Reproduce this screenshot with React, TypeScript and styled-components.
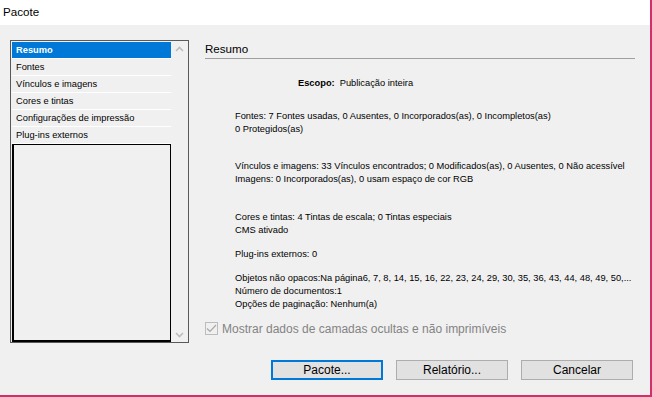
import styled, { createGlobalStyle } from 'styled-components'

const GlobalStyle = createGlobalStyle`
  html, body {
    margin: 0;
    padding: 0;
    background: #f0f0f0;
    overflow: hidden;
  }
  * { box-sizing: border-box; }
`

const Window = styled.div`
  width: 652px;
  height: 397px;
  display: flex;
  flex-direction: column;
  background: #f0f0f0;
  border-right: 2px solid #d2306c;
  border-bottom: 2px solid #d2306c;
  font-family: 'Liberation Sans', Arial, sans-serif;
  color: #000;
`

const TitleBar = styled.div`
  height: 25px;
  line-height: 24px;
  padding-left: 3px;
  background: #fff;
  font-size: 11.6px;
`

const Body = styled.div`
  display: flex;
  gap: 16px;
  padding: 15px 0 0 10px;
`

const ListBox = styled.div`
  width: 179px;
  height: 303px;
  display: flex;
  border: 1px solid #5a5a5a;
  padding: 1px 0 0 1px;
`

const Items = styled.div`
  width: 159px;
  display: flex;
  flex-direction: column;
`

const Item = styled.div<{ $selected?: boolean }>`
  height: 17px;
  line-height: 16px;
  padding-left: 4px;
  font-size: 9.3px;
  border-bottom: 1px solid #fff;
  background: ${(p) => (p.$selected ? '#0078d7' : '#f0f0f0')};
  color: ${(p) => (p.$selected ? '#fff' : '#000')};
  font-weight: ${(p) => (p.$selected ? 700 : 400)};
  white-space: nowrap;
`

const EmptyArea = styled.div`
  flex: 1;
  border: 1px solid #000;
  border-left-width: 2px;
  border-bottom-width: 2px;
`

const ScrollBar = styled.div`
  width: 17px;
  display: flex;
  flex-direction: column;
  justify-content: space-between;
  align-items: center;
  padding: 4px 0 4px 0;
`

const Panel = styled.div`
  width: 430px;
  display: flex;
  flex-direction: column;
`

const PanelTitle = styled.div`
  height: 19px;
  line-height: 18px;
  font-size: 11.6px;
  border-bottom: 1px solid #a0a0a0;
`

const Block = styled.div<{ $gap: number; $indent?: number }>`
  margin-top: ${(p) => p.$gap}px;
  padding-left: ${(p) => p.$indent ?? 30}px;
  font-size: 9.3px;
  line-height: 13px;
  white-space: nowrap;
`

const Label = styled.span`
  font-weight: 700;
  margin-right: 5px;
`

const CheckRow = styled.label`
  margin-top: 11px;
  display: flex;
  align-items: center;
  gap: 4px;
  height: 13px;
  font-size: 12px;
  color: #838383;
`

const CheckBox = styled.span`
  width: 13px;
  height: 13px;
  border: 1px solid #bcbcbc;
  background: #f0f0f0;
  display: flex;
  align-items: center;
  justify-content: center;
`

const Footer = styled.div`
  display: flex;
  justify-content: flex-end;
  gap: 13px;
  padding: 17px 17px 0 0;
`

const Button = styled.button<{ $default?: boolean }>`
  width: 112px;
  height: 20px;
  padding: 0;
  background: #e1e1e1;
  border: ${(p) => (p.$default ? '2px solid #0078d7' : '1px solid #adadad')};
  font-family: 'Liberation Sans', Arial, sans-serif;
  font-size: 12px;
  color: #000;
`

const Chevron = ({ up }: { up?: boolean }) => (
  <svg width="9" height="6" viewBox="0 0 9 6">
    <path
      d={up ? 'M1 5 L4.5 1.5 L8 5' : 'M1 1 L4.5 4.5 L8 1'}
      fill="none"
      stroke="#bdbdbd"
      strokeWidth="1.6"
    />
  </svg>
)

const sections = [
  'Resumo',
  'Fontes',
  'Vínculos e imagens',
  'Cores e tintas',
  'Configurações de impressão',
  'Plug-ins externos',
]

export default function App() {
  return (
    <>
      <GlobalStyle />
      <Window>
        <TitleBar>Pacote</TitleBar>
        <Body>
          <ListBox>
            <Items>
              {sections.map((s, i) => (
                <Item key={s} $selected={i === 0}>{s}</Item>
              ))}
              <EmptyArea />
            </Items>
            <ScrollBar>
              <Chevron up />
              <Chevron />
            </ScrollBar>
          </ListBox>
          <Panel>
            <PanelTitle>Resumo</PanelTitle>
            <Block $gap={18} $indent={93}>
              <Label>Escopo:</Label>Publicação inteira
            </Block>
            <Block $gap={20}>
              Fontes: 7 Fontes usadas, 0 Ausentes, 0 Incorporados(as), 0 Incompletos(as)
              <br />0 Protegidos(as)
            </Block>
            <Block $gap={24}>
              Vínculos e imagens: 33 Vínculos encontrados; 0 Modificados(as), 0 Ausentes, 0 Não acessível
              <br />Imagens: 0 Incorporados(as), 0 usam espaço de cor RGB
            </Block>
            <Block $gap={25}>
              Cores e tintas: 4 Tintas de escala; 0 Tintas especiais
              <br />CMS ativado
            </Block>
            <Block $gap={11}>Plug-ins externos: 0</Block>
            <Block $gap={11}>
              Objetos não opacos:Na página6, 7, 8, 14, 15, 16, 22, 23, 24, 29, 30, 35, 36, 43, 44, 48, 49, 50,...
              <br />Número de documentos:1
              <br />Opções de paginação: Nenhum(a)
            </Block>
            <CheckRow>
              <CheckBox>
                <svg width="11" height="9" viewBox="0 0 11 9">
                  <path d="M1 4.5 L4 7.5 L10 1" fill="none" stroke="#a8a8a8" strokeWidth="1.2" />
                </svg>
              </CheckBox>
              Mostrar dados de camadas ocultas e não imprimíveis
            </CheckRow>
          </Panel>
        </Body>
        <Footer>
          <Button $default>Pacote...</Button>
          <Button>Relatório...</Button>
          <Button>Cancelar</Button>
        </Footer>
      </Window>
    </>
  )
}
